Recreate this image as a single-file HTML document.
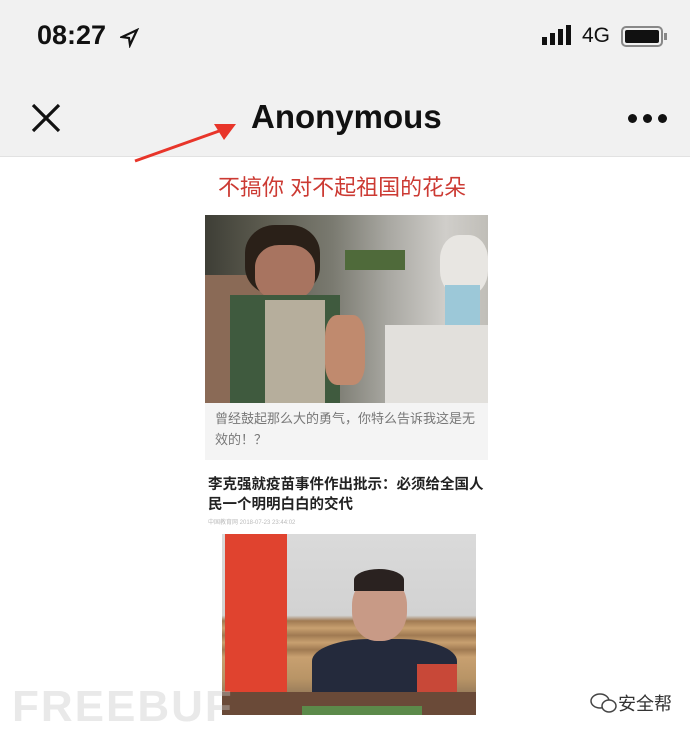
<!DOCTYPE html>
<html><head><meta charset="utf-8"><style>
*{margin:0;padding:0;box-sizing:border-box}
body{width:690px;height:733px;overflow:hidden;background:#fff;font-family:"Liberation Sans","Noto Sans CJK SC",sans-serif;position:relative}
.hdr{position:absolute;left:0;top:0;width:690px;height:157px;background:#f1f1f1;border-bottom:1px solid #e2e2e2}
.abs{position:absolute}
</style></head><body>
<div class="hdr"></div>
<div class="abs" style="left:37px;top:20px;font-size:27px;font-weight:bold;color:#111">08:27</div>
<svg class="abs" style="left:120px;top:28px" width="20" height="20" viewBox="0 0 20 20"><path d="M2 9 L17 2 L10 17 L9 10 Z" fill="none" stroke="#111" stroke-width="2.2"/></svg>
<div class="abs" style="left:542px;top:37px;width:5px;height:8px;background:#111"></div>
<div class="abs" style="left:550px;top:33px;width:5px;height:12px;background:#111"></div>
<div class="abs" style="left:558px;top:29px;width:5px;height:16px;background:#111"></div>
<div class="abs" style="left:566px;top:25px;width:5px;height:20px;background:#111"></div>
<div class="abs" style="left:582px;top:24px;font-size:21px;color:#111">4G</div>
<div class="abs" style="left:621px;top:26px;width:42px;height:21px;border:2px solid #888;border-radius:5px;padding:2px"><div style="width:100%;height:100%;background:#111;border-radius:2px"></div></div>
<div class="abs" style="left:664px;top:33px;width:3px;height:7px;background:#888"></div>
<svg class="abs" style="left:30px;top:102px" width="32" height="32" viewBox="0 0 32 32"><path d="M3 3L29 29M29 3L3 29" stroke="#111" stroke-width="3.2"/></svg>
<div class="abs" style="left:251px;top:98px;font-size:33px;font-weight:bold;color:#111">Anonymous</div>
<div class="abs" style="left:628px;top:114px;width:9px;height:9px;border-radius:50%;background:#111"></div>
<div class="abs" style="left:643px;top:114px;width:9px;height:9px;border-radius:50%;background:#111"></div>
<div class="abs" style="left:658px;top:114px;width:9px;height:9px;border-radius:50%;background:#111"></div>
<svg class="abs" style="left:130px;top:120px" width="110" height="45" viewBox="0 0 110 45"><path d="M5 41 L92 10" stroke="#e8352a" stroke-width="3"/><path d="M106 4 L84 4 L94 20 Z" fill="#e8352a"/></svg>
<div class="abs" style="left:218px;top:170px;font-size:22px;color:#cc3a33">不搞你 对不起祖国的花朵</div>
<div class="abs" style="left:205px;top:215px;width:283px;height:188px;overflow:hidden;background:linear-gradient(90deg,#3e3e36 0%,#5b5a4e 20%,#7a7a70 45%,#a9a8a2 65%,#d0ceca 85%,#c0beb8 100%)">
 <div class="abs" style="left:0;top:60px;width:60px;height:128px;background:#8a6a56"></div>
 <div class="abs" style="left:40px;top:10px;width:75px;height:70px;border-radius:40%;background:#2a2018"></div>
 <div class="abs" style="left:50px;top:30px;width:60px;height:55px;border-radius:40%;background:#a87460"></div>
 <div class="abs" style="left:25px;top:80px;width:110px;height:108px;background:#3f5a3e"></div>
 <div class="abs" style="left:60px;top:85px;width:60px;height:103px;background:#b6ae9c"></div>
 <div class="abs" style="left:120px;top:100px;width:40px;height:70px;border-radius:30%;background:#c08a6e"></div>
 <div class="abs" style="left:180px;top:110px;width:103px;height:78px;background:#e2e0dc"></div>
 <div class="abs" style="left:235px;top:20px;width:48px;height:60px;border-radius:40%;background:#e8e6e2"></div>
 <div class="abs" style="left:240px;top:70px;width:35px;height:40px;background:#9cc8d8"></div>
 <div class="abs" style="left:140px;top:35px;width:60px;height:20px;background:#4f6a3a"></div>
</div>
<div class="abs" style="left:205px;top:403px;width:283px;height:57px;background:#f4f4f4;padding:5px 10px;font-size:13px;line-height:21px;color:#777">曾经鼓起那么大的勇气，你特么告诉我这是无效的！？</div>
<div class="abs" style="left:208px;top:475px;width:280px;font-size:14.5px;line-height:20px;font-weight:bold;color:#222">李克强就疫苗事件作出批示：必须给全国人民一个明明白白的交代</div>
<div class="abs" style="left:208px;top:517px;font-size:6px;color:#bbb">中国教育网 2018-07-23 23:44:02</div>
<div class="abs" style="left:222px;top:534px;width:254px;height:181px;background:linear-gradient(180deg,#dadada 0%,#d2d2d2 45%,#a07a52 48%,#c8a070 52%,#a07a52 56%,#c8a070 60%,#a07a52 64%,#c8a070 68%,#b89466 80%,#6a5a4a 100%);overflow:hidden">
 <div class="abs" style="left:3px;top:0;width:62px;height:160px;background:#e0432f"></div>
 <div class="abs" style="left:90px;top:105px;width:145px;height:55px;border-radius:40% 40% 0 0;background:#242a3c"></div>
 <div class="abs" style="left:130px;top:42px;width:55px;height:65px;border-radius:45%;background:#c89a86"></div>
 <div class="abs" style="left:132px;top:35px;width:50px;height:22px;border-radius:50% 50% 0 0;background:#2a2220"></div>
 <div class="abs" style="left:195px;top:130px;width:40px;height:30px;background:#c84838"></div>
 <div class="abs" style="left:0;top:158px;width:254px;height:23px;background:#6a4a38"></div>
 <div class="abs" style="left:80px;top:172px;width:120px;height:9px;background:#5c8a4a"></div>
</div>
<div class="abs" style="left:12px;top:682px;font-size:44px;font-weight:bold;color:rgba(200,200,200,0.4);letter-spacing:2px">FREEBUF</div>
<svg class="abs" style="left:590px;top:692px" width="28" height="22" viewBox="0 0 28 22"><ellipse cx="10" cy="9" rx="9" ry="7" fill="none" stroke="#444" stroke-width="1.5"/><ellipse cx="19" cy="14" rx="7" ry="6" fill="#fff" stroke="#444" stroke-width="1.5"/></svg>
<div class="abs" style="left:618px;top:690px;font-size:18px;color:#333">安全帮</div>
</body></html>
